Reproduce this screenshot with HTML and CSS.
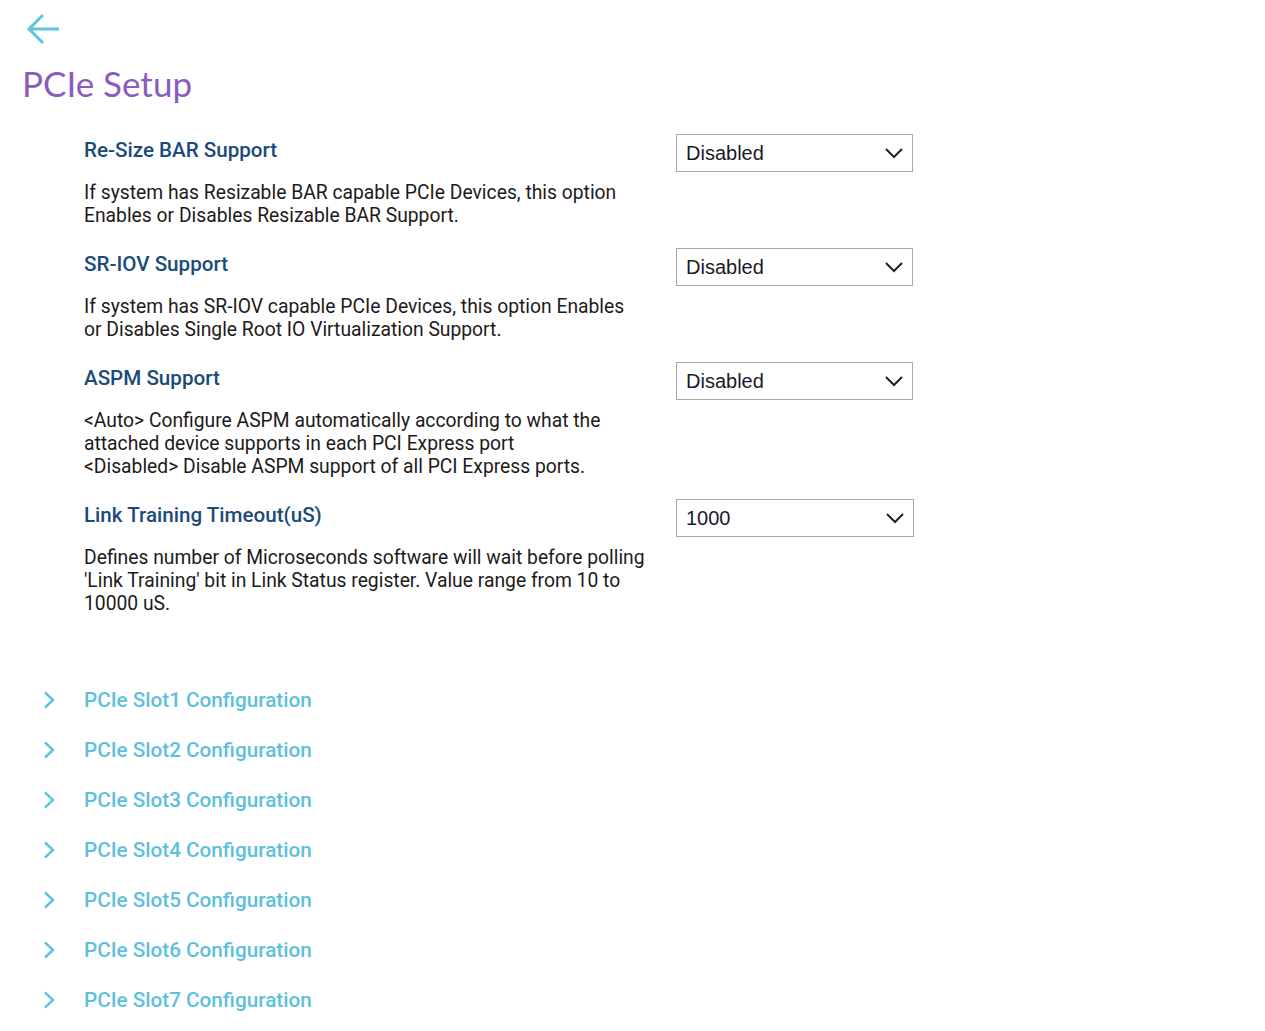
FILE: index.html
```html
<!DOCTYPE html>
<html>
<head>
<meta charset="utf-8">
<link rel="stylesheet" href="styles.css">
</head>
<body>
<div class="page">
  <div class="back">
    <svg width="36" height="34" viewBox="0 0 36 34"><path d="M34 16H4M18 2 4 16l14 14" fill="none" stroke="#5ec3df" stroke-width="3"/></svg>
  </div>
  <h1 class="title">PCIe Setup</h1>
  <div class="settings">
    <div class="setting">
      <div class="info">
        <div class="label">Re-Size BAR Support</div>
        <div class="desc">If system has Resizable BAR capable PCIe Devices, this option Enables or Disables Resizable BAR Support.</div>
      </div>
      <div class="select"><span>Disabled</span><svg width="20" height="12" viewBox="0 0 20 12"><path d="M2 2l8 8 8-8" fill="none" stroke="#222" stroke-width="2"/></svg></div>
    </div>
    <div class="setting">
      <div class="info">
        <div class="label">SR-IOV Support</div>
        <div class="desc">If system has SR-IOV capable PCIe Devices, this option Enables or Disables Single Root IO Virtualization Support.</div>
      </div>
      <div class="select"><span>Disabled</span><svg width="20" height="12" viewBox="0 0 20 12"><path d="M2 2l8 8 8-8" fill="none" stroke="#222" stroke-width="2"/></svg></div>
    </div>
    <div class="setting">
      <div class="info">
        <div class="label">ASPM Support</div>
        <div class="desc">&lt;Auto&gt; Configure ASPM automatically according to what the attached device supports in each PCI Express port<br>&lt;Disabled&gt; Disable ASPM support of all PCI Express ports.</div>
      </div>
      <div class="select"><span>Disabled</span><svg width="20" height="12" viewBox="0 0 20 12"><path d="M2 2l8 8 8-8" fill="none" stroke="#222" stroke-width="2"/></svg></div>
    </div>
    <div class="setting">
      <div class="info">
        <div class="label">Link Training Timeout(uS)</div>
        <div class="desc">Defines number of Microseconds software will wait before polling 'Link Training' bit in Link Status register. Value range from 10 to 10000 uS.</div>
      </div>
      <div class="select wide"><span>1000</span><svg width="20" height="12" viewBox="0 0 20 12"><path d="M2 2l8 8 8-8" fill="none" stroke="#222" stroke-width="2"/></svg></div>
    </div>
  </div>
  <ul class="links">
    <li><svg width="14" height="18" viewBox="0 0 14 18"><path d="M2 1.5l8 7.5-8 7.5" fill="none" stroke="#5ec3df" stroke-width="2.4"/></svg><span>PCIe Slot1 Configuration</span></li>
    <li><svg width="14" height="18" viewBox="0 0 14 18"><path d="M2 1.5l8 7.5-8 7.5" fill="none" stroke="#5ec3df" stroke-width="2.4"/></svg><span>PCIe Slot2 Configuration</span></li>
    <li><svg width="14" height="18" viewBox="0 0 14 18"><path d="M2 1.5l8 7.5-8 7.5" fill="none" stroke="#5ec3df" stroke-width="2.4"/></svg><span>PCIe Slot3 Configuration</span></li>
    <li><svg width="14" height="18" viewBox="0 0 14 18"><path d="M2 1.5l8 7.5-8 7.5" fill="none" stroke="#5ec3df" stroke-width="2.4"/></svg><span>PCIe Slot4 Configuration</span></li>
    <li><svg width="14" height="18" viewBox="0 0 14 18"><path d="M2 1.5l8 7.5-8 7.5" fill="none" stroke="#5ec3df" stroke-width="2.4"/></svg><span>PCIe Slot5 Configuration</span></li>
    <li><svg width="14" height="18" viewBox="0 0 14 18"><path d="M2 1.5l8 7.5-8 7.5" fill="none" stroke="#5ec3df" stroke-width="2.4"/></svg><span>PCIe Slot6 Configuration</span></li>
    <li><svg width="14" height="18" viewBox="0 0 14 18"><path d="M2 1.5l8 7.5-8 7.5" fill="none" stroke="#5ec3df" stroke-width="2.4"/></svg><span>PCIe Slot7 Configuration</span></li>
  </ul>
</div>
</body>
</html>
```
FILE: styles.css
```css
* { box-sizing: border-box; }
body { margin: 0; background: #fff; font-family: Roboto, "Liberation Sans", sans-serif; }
.page { padding: 12px 0 0 22px; }
.back { height: 36px; padding-left: 3px; display: flex; align-items: center; }
.title { margin: 15px 0 0 0; font-family: Lato, sans-serif; font-weight: 400; font-size: 35px; line-height: 40px; color: #8a5cbd; }
.settings { padding: 31px 0 0 62px; }
.setting { display: flex; gap: 30px; }
.info { width: 562px; padding-bottom: 21px; }
.label { font-size: 20.6px; font-weight: 500; color: #1b4b7a; line-height: 32px; height: 32px; }
.desc { margin-top: 15px; font-size: 19.3px; line-height: 23px; color: #1e1a1a; }
.select { width: 237px; height: 38px; border: 1px solid #a8a8a8; display: flex; align-items: center; justify-content: space-between; padding: 0 8px 0 9px; font-family: "Liberation Sans", Arial, sans-serif; font-size: 20px; color: #1a1a2a; }
.select.wide { width: 238px; }
.links { list-style: none; margin: 39px 0 0 0; padding: 0; }
.links li { display: flex; align-items: center; height: 50px; gap: 27px; padding-left: 21px; color: #5ec0dc; font-size: 20.7px; font-weight: 500; }
```
